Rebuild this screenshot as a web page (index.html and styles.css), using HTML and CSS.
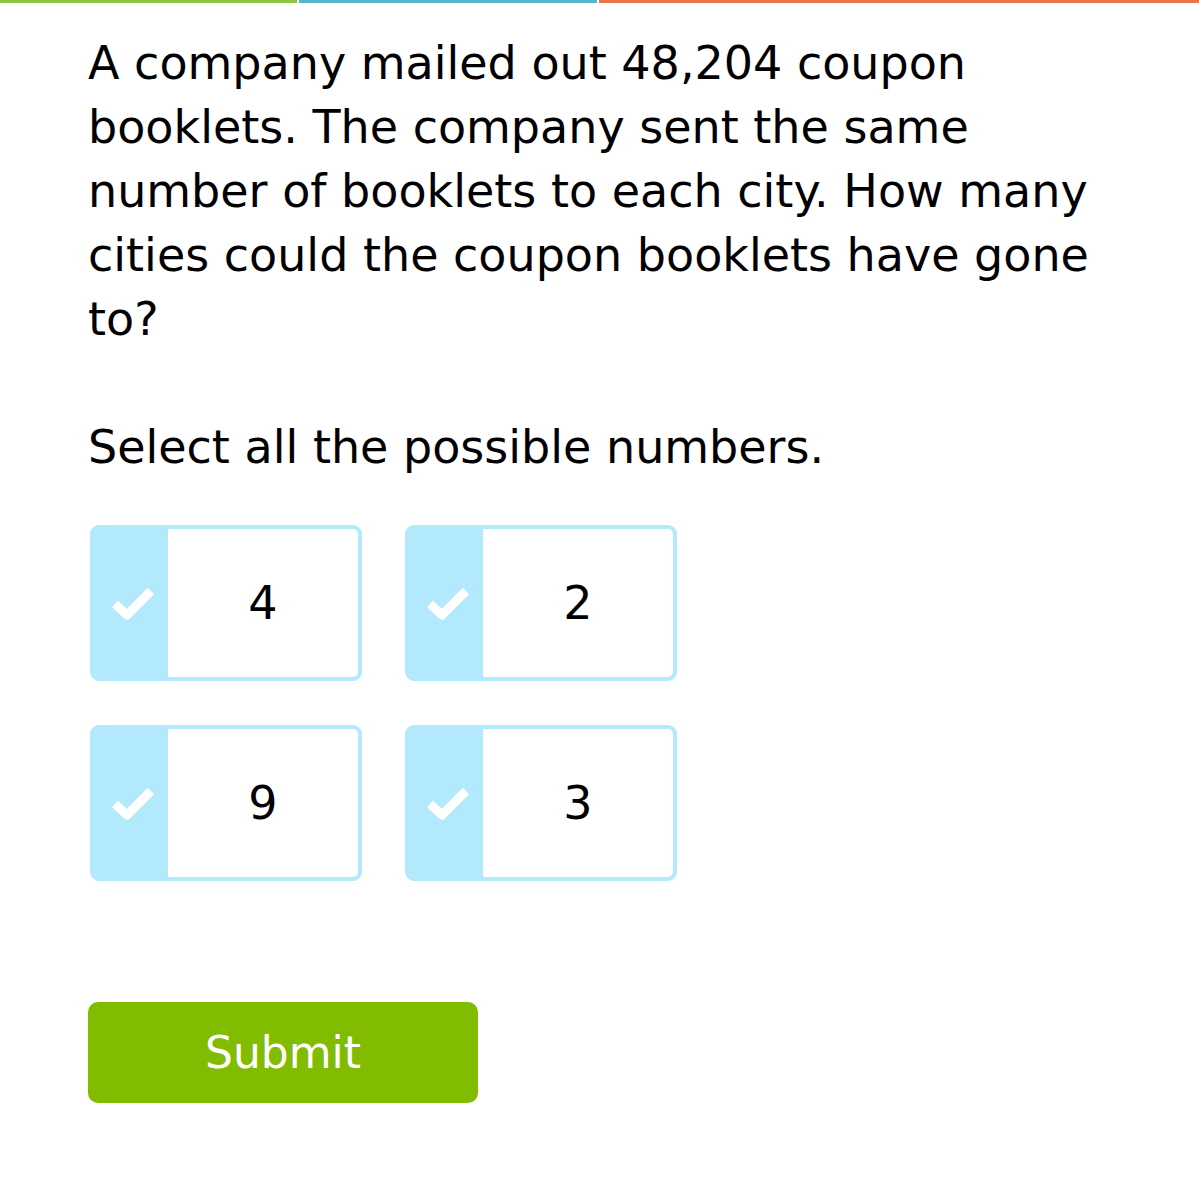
FILE: index.html
```html
<!DOCTYPE html>
<html>
<head>
<meta charset="utf-8">
<link rel="stylesheet" href="styles.css">
</head>
<body>
<div class="topbar">
  <div class="seg seg-green"></div>
  <div class="seg seg-blue"></div>
  <div class="seg seg-orange"></div>
</div>
<main class="content">
  <p class="question">A company mailed out 48,204 coupon booklets. The company sent the same number of booklets to each city. How many cities could the coupon booklets have gone to?</p>
  <p class="prompt">Select all the possible numbers.</p>
  <div class="choices">
    <div class="choice"><div class="check"><svg viewBox="0 0 44 34" width="44" height="34"><path d="M4 18 L16 29 L40 5" fill="none" stroke="#fff" stroke-width="9" stroke-linejoin="round"/></svg></div><div class="label">4</div></div>
    <div class="choice"><div class="check"><svg viewBox="0 0 44 34" width="44" height="34"><path d="M4 18 L16 29 L40 5" fill="none" stroke="#fff" stroke-width="9" stroke-linejoin="round"/></svg></div><div class="label">2</div></div>
    <div class="choice"><div class="check"><svg viewBox="0 0 44 34" width="44" height="34"><path d="M4 18 L16 29 L40 5" fill="none" stroke="#fff" stroke-width="9" stroke-linejoin="round"/></svg></div><div class="label">9</div></div>
    <div class="choice"><div class="check"><svg viewBox="0 0 44 34" width="44" height="34"><path d="M4 18 L16 29 L40 5" fill="none" stroke="#fff" stroke-width="9" stroke-linejoin="round"/></svg></div><div class="label">3</div></div>
  </div>
  <button class="submit">Submit</button>
</main>
</body>
</html>
```
FILE: styles.css
```css
html, body {
  margin: 0;
  padding: 0;
  background: #fff;
}
body {
  font-family: "DejaVu Sans", Verdana, sans-serif;
  color: #000;
}
.topbar {
  display: flex;
  gap: 2px;
  height: 3px;
}
.seg { height: 3px; }
.seg-green { width: 297px; background: #8cc63f; }
.seg-blue { width: 298px; background: #5ab4cf; }
.seg-orange { flex: 1; background: #e8744a; }
.content {
  padding: 0 88px;
}
.question {
  margin: 28px 0 0;
  font-size: 46px;
  line-height: 64px;
}
.prompt {
  margin: 64px 0 0;
  font-size: 46px;
  line-height: 64px;
}
.choices {
  margin: 46px 0 0 2px;
  display: grid;
  grid-template-columns: 272px 272px;
  column-gap: 43px;
  row-gap: 44px;
}
.choice {
  display: flex;
  height: 156px;
  box-sizing: border-box;
  border: 4px solid #b3e9fc;
  border-radius: 9px;
  overflow: hidden;
}
.check {
  width: 74px;
  background: #b3e9fc;
  display: flex;
  align-items: center;
  justify-content: center;
}
.check svg {
  margin-left: 4px;
}
.label {
  flex: 1;
  display: flex;
  align-items: center;
  justify-content: center;
  font-size: 46px;
}
.submit {
  margin-top: 121px;
  width: 390px;
  height: 101px;
  background: #82bc00;
  border: none;
  border-radius: 10px;
  color: #fff;
  font-family: "DejaVu Sans", Verdana, sans-serif;
  font-size: 44px;
  display: block;
  padding: 0;
}
```
